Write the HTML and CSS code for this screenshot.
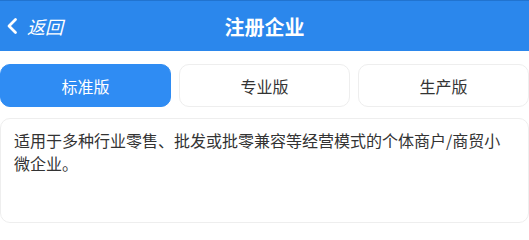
FILE: index.html
```html
<!DOCTYPE html>
<html lang="zh">
<head>
<meta charset="utf-8">
<link rel="stylesheet" href="styles.css">
</head>
<body>
<header class="nav">
  <a class="back">
    <svg class="chev" width="12" height="18" viewBox="0 0 12 18"><polyline points="9.5,2.5 3,9 9.5,15.5" fill="none" stroke="#fff" stroke-width="2.8" stroke-linecap="round" stroke-linejoin="round"/></svg>
    <span class="back-text">返回</span>
  </a>
  <h1 class="title">注册企业</h1>
</header>
<div class="tabs">
  <div class="tab active">标准版</div>
  <div class="tab">专业版</div>
  <div class="tab">生产版</div>
</div>
<div class="card">适用于多种行业零售、批发或批零兼容等经营模式的个体商户/商贸小微企业。</div>
</body>
</html>
```
FILE: styles.css
```css
* { box-sizing: border-box; }
body {
  margin: 0;
  background: #fff;
  font-family: "Noto Sans CJK SC", "Noto Sans", sans-serif;
  color: #333;
}
.nav {
  position: relative;
  height: 51px;
  background: #2b87ec;
  border-top: 1px solid #2173cf;
  display: flex;
  align-items: center;
  justify-content: center;
}
.back {
  position: absolute;
  left: 6px;
  top: 0;
  bottom: 0;
  display: flex;
  align-items: center;
  gap: 9px;
  color: #fff;
}
.chev { display: block; }
.back-text {
  font-size: 18px;
  font-style: italic;
}
.title {
  margin: 0;
  font-size: 20px;
  font-weight: 700;
  color: #fff;
}
.tabs {
  display: flex;
  gap: 8px;
  margin-top: 13px;
}
.tab {
  flex: 1;
  height: 43px;
  border: 1px solid #eeeeee;
  border-radius: 10px;
  display: flex;
  align-items: center;
  justify-content: center;
  font-size: 16px;
  color: #333;
  background: #fff;
}
.tab.active {
  background: #2f8cf3;
  border-color: #2f8cf3;
  color: #fff;
}
.card {
  margin-top: 11px;
  height: 105px;
  border: 1px solid #eeeeee;
  border-radius: 10px;
  padding: 10px 14px 0 13px;
  font-size: 16px;
  line-height: 23px;
  color: #333;
}
```
